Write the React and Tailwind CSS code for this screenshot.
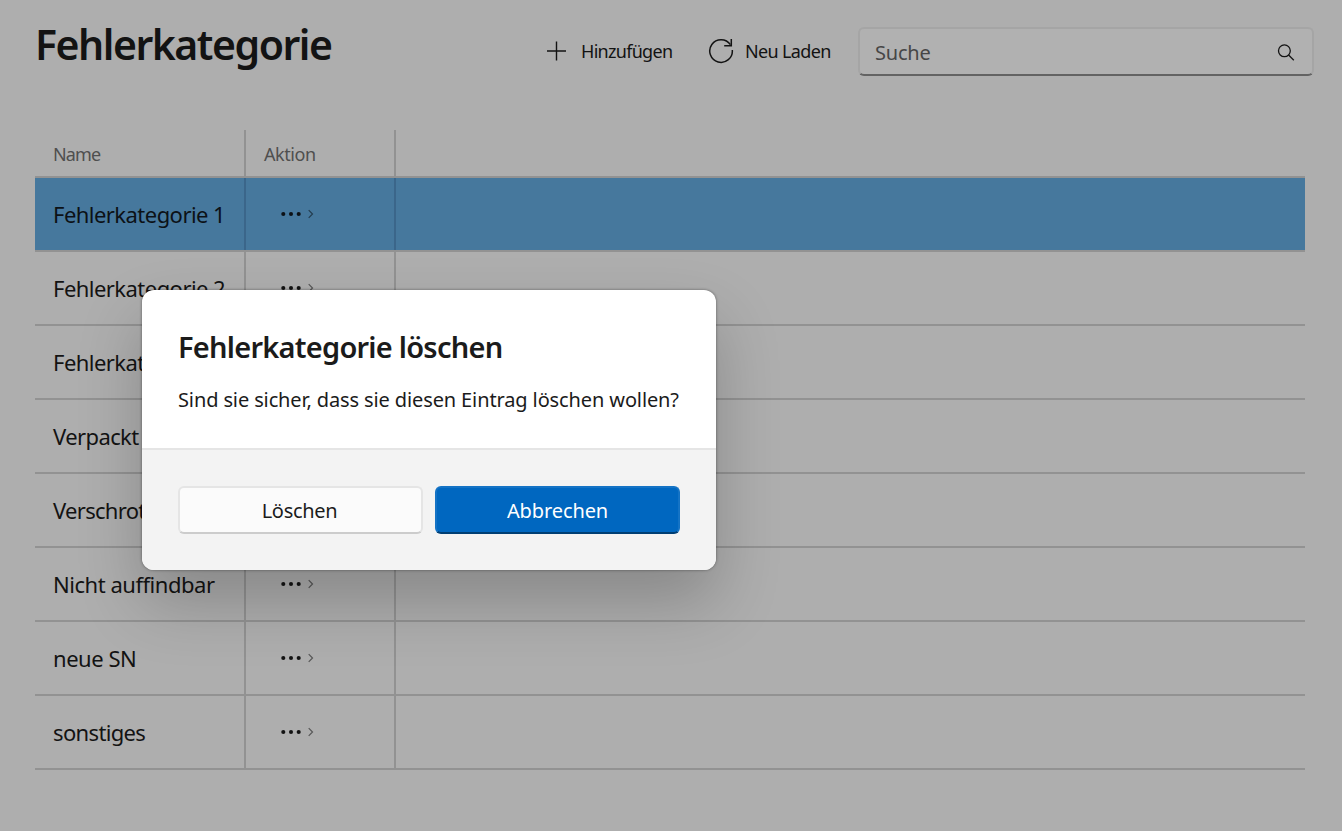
const rows = [
  { name: "Fehlerkategorie 1", tracking: "tracking-[-0.54px]", selected: true },
  { name: "Fehlerkategorie 2", tracking: "tracking-[-0.54px]" },
  { name: "Fehlerkategorie 3", tracking: "tracking-[-0.54px]" },
  { name: "Verpackt", tracking: "tracking-[-0.6px]" },
  { name: "Verschrottet", tracking: "tracking-[-0.7px]" },
  { name: "Nicht auffindbar", tracking: "tracking-[-0.47px]" },
  { name: "neue SN", tracking: "tracking-[-0.45px]" },
  { name: "sonstiges", tracking: "tracking-[-0.65px]" },
];

function PlusIcon() {
  return (
    <svg className="-mt-px size-5" viewBox="0 0 20 20" fill="none" stroke="currentColor" strokeWidth="1.4">
      <path d="M10.5 0.5V19.5M1 10H20" />
    </svg>
  );
}

function ReloadIcon() {
  return (
    <svg className="size-[26px]" viewBox="0 0 26 26" fill="none" stroke="currentColor" strokeWidth="1.5">
      <path d="M24.3 12A11.3 11.3 0 1 1 22.4 6.7" />
      <path d="M23.3 1V7.7H16.2" />
    </svg>
  );
}

function SearchIcon() {
  return (
    <svg className="mt-[3px] size-[18px]" viewBox="0 0 18 18" fill="none" stroke="currentColor" strokeWidth="1.3">
      <circle cx="7.4" cy="6.8" r="5.9" />
      <path d="M11.6 11L16.8 16.2" />
    </svg>
  );
}

function RowAction() {
  return (
    <svg className="h-3 w-9" viewBox="0 0 36 12" fill="none">
      <g fill="currentColor">
        <circle cx="3.3" cy="6" r="2.05" />
        <circle cx="11" cy="6" r="2.05" />
        <circle cx="18.7" cy="6" r="2.05" />
      </g>
      <path d="M28.7 2.2L32.5 6L28.7 9.8" stroke="#000" strokeOpacity="0.5" strokeWidth="1.2" />
    </svg>
  );
}

function Row({ name, tracking, selected }) {
  const line = selected ? "border-[#3b668a]" : "border-[#929292]";
  return (
    <div className="border-b-2 border-[#929292]">
      <div className={selected ? "flex h-[72px] bg-[#46789d] text-[#0c1116]" : "flex h-[72px]"}>
        <div className={`flex w-[211px] items-center border-r-2 pl-[18px] text-[22px] whitespace-nowrap ${line} ${tracking}`}>
          {name}
        </div>
        <div className={`flex w-[150px] items-center border-r-2 pl-[34px] ${line}`}>
          <RowAction />
        </div>
      </div>
    </div>
  );
}

function Dialog() {
  return (
    <div
      role="dialog"
      className="absolute top-[290px] left-[142px] flex h-[280px] w-[574px] flex-col overflow-hidden rounded-xl bg-white text-[#1b1b1b] shadow-[0_0_3px_rgba(0,0,0,0.45),0_32px_64px_rgba(0,0,0,0.22)]"
    >
      <div className="h-[158px] px-9 pt-[37px]">
        <h2 className="text-[29px] leading-10 font-semibold tracking-[-0.76px] whitespace-nowrap">
          Fehlerkategorie löschen
        </h2>
        <p className="mt-[19px] text-[20px] leading-7 tracking-[-0.12px] whitespace-nowrap">
          Sind sie sicher, dass sie diesen Eintrag löschen wollen?
        </p>
      </div>
      <div className="flex flex-1 gap-3 border-t-2 border-[#e5e5e5] bg-[#f3f3f3] px-9 pt-9">
        <button className="h-12 w-[245px] rounded-md border-2 border-[#e5e5e5] border-b-[#cccccc] bg-[#fbfbfb] pt-0.5 pr-0.5 text-[20px] tracking-[-0.3px]">
          Löschen
        </button>
        <button className="h-12 w-[245px] rounded-md border-2 border-[#1473c5] border-b-[#003e73] bg-[#0067c0] pt-0.5 text-[20px] tracking-[-0.1px] text-white">
          Abbrechen
        </button>
      </div>
    </div>
  );
}

export default function App() {
  return (
    <div className="relative h-[831px] w-[1342px] overflow-hidden bg-[#aeaeae] font-['Noto_Sans','Open_Sans',sans-serif] text-[#131313]">
      <header className="flex pl-[35px]">
        <h1 className="w-[511px] pt-4 text-[41px] leading-14 font-semibold tracking-[-1.48px]">Fehlerkategorie</h1>
        <button className="flex h-[102px] w-[162px] items-center text-[18px]">
          <PlusIcon />
          <span className="ml-[15px] pt-px tracking-[-0.7px]">Hinzufügen</span>
        </button>
        <button className="flex h-[102px] w-[150px] items-center text-[18px]">
          <ReloadIcon />
          <span className="ml-[11px] pt-px tracking-[-0.65px]">Neu Laden</span>
        </button>
        <div className="mt-[27px] flex h-[49px] w-[456px] items-center justify-between rounded-md border-2 border-[#a5a5a5] border-b-[#636363] bg-[#b1b1b1] pr-[17px] pl-[15px]">
          <span className="pt-[3px] text-[20px] tracking-[-0.2px] text-[#464646]">Suche</span>
          <SearchIcon />
        </div>
      </header>
      <main className="mt-7 ml-[35px] w-[1270px]">
        <div className="flex h-12 border-b-2 border-[#929292] text-[18px] text-[#4f4f4f]">
          <div className="flex w-[211px] items-center border-r-2 border-[#929292] pt-[3px] pl-[18px] tracking-[-0.9px]">Name</div>
          <div className="flex w-[150px] items-center border-r-2 border-[#929292] pt-[3px] pl-[18px] tracking-[-0.45px]">Aktion</div>
        </div>
        {rows.map((row) => (
          <Row key={row.name} {...row} />
        ))}
      </main>
      <Dialog />
    </div>
  );
}
